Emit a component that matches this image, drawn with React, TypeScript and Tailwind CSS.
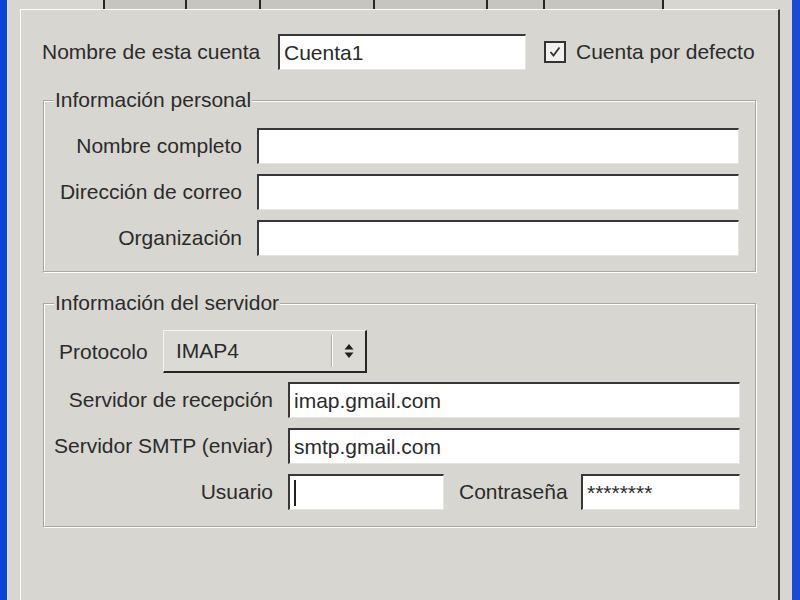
import type { ReactNode } from 'react';

const TABS = [84, 74, 114, 113, 57, 119];

function TextBox({ width, children }: { width: string; children?: ReactNode }) {
  return (
    <div
      className={`${width} h-[36px] bg-white border-t-2 border-l-2 border-b border-r border-t-[#383838] border-l-[#383838] border-b-[#e6e4df] border-r-[#e6e4df] flex items-center pl-[4px] overflow-hidden whitespace-nowrap`}
    >
      {children}
    </div>
  );
}

function Group({ title, children, className }: { title: string; children: ReactNode; className: string }) {
  return (
    <fieldset
      className={`ml-[1px] w-[713px] border border-[#a9a7a1] shadow-[inset_1px_1px_0_#ffffff,1px_1px_0_#ffffff] ${className}`}
    >
      <legend className="ml-[10px] px-[1px] leading-[24px] bg-[#d8d6d1]">{title}</legend>
      {children}
    </fieldset>
  );
}

export default function App() {
  return (
    <div className="w-[800px] h-[600px] overflow-hidden flex bg-[#d8d6d1] font-['Liberation_Sans',Arial,sans-serif] text-[21px] text-[#2b2b2b]">
      <div className="w-[7px] bg-[#0b44dc]" />
      <div className="w-px bg-[#eceae6]" />
      <div className="flex-1 flex flex-col px-[12px]">
        {/* tab strip, only its lower edge is in view */}
        <div className="h-[9px] flex pl-[83px]">
          {TABS.map((w, i) => (
            <div
              key={i}
              style={{ width: w }}
              className={`h-full bg-[#c7c5c0] border-r-2 border-[#262626] ${i === 0 ? 'border-l-2' : ''}`}
            />
          ))}
        </div>

        <div className="flex-1 border-t border-l border-white border-r-2 border-r-[#3a3a3a] pt-[24px] pl-[21px]">
          <div className="flex items-center h-[36px]">
            <span className="w-[222px] whitespace-nowrap">Nombre de esta cuenta</span>
            <div className="ml-[14px]">
              <TextBox width="w-[248px]">Cuenta1</TextBox>
            </div>
            <div className="ml-[18px] w-[22px] h-[22px] border-2 border-[#333333] bg-[#f2f1ee] flex items-center justify-center">
              <svg width="14" height="14" viewBox="0 0 14 14">
                <polyline points="2.5,7 5.5,10.5 11.5,2.5" fill="none" stroke="#333333" strokeWidth="1.8" />
              </svg>
            </div>
            <span className="ml-[10px]">Cuenta por defecto</span>
          </div>

          <Group title="Información personal" className="mt-[18px] pt-[16px] pb-[15px]">
            <div className="flex flex-col gap-[10px]">
              {['Nombre completo', 'Dirección de correo', 'Organización'].map((label) => (
                <div key={label} className="flex items-center h-[36px]">
                  <span className="w-[198px] text-right">{label}</span>
                  <div className="ml-[15px]">
                    <TextBox width="w-[482px]" />
                  </div>
                </div>
              ))}
            </div>
          </Group>

          <Group title="Información del servidor" className="mt-[19px] pt-[15px] pb-[16px]">
            <div className="flex items-center h-[43px] pl-[15px]">
              <span className="w-[91px]">Protocolo</span>
              <div className="ml-[13px] w-[204px] h-[43px] bg-[#dcdad5] border-t border-l border-[#f6f5f2] border-b-2 border-r-2 border-b-[#262626] border-r-[#262626] flex items-center">
                <span className="flex-1 pl-[12px]">IMAP4</span>
                <div className="w-[2px] h-[32px] border-l border-r border-l-[#b4b2ac] border-r-white" />
                <div className="w-[32px] flex items-center justify-center">
                  <svg width="10" height="18" viewBox="0 0 10 18">
                    <polygon points="5,2 9.5,7.5 0.5,7.5" fill="#1f1f1f" />
                    <polygon points="0.5,10.5 9.5,10.5 5,16" fill="#1f1f1f" />
                  </svg>
                </div>
              </div>
            </div>

            <div className="mt-[9px] flex flex-col gap-[10px]">
              <div className="flex items-center h-[36px]">
                <span className="w-[229px] text-right">Servidor de recepción</span>
                <div className="ml-[15px]">
                  <TextBox width="w-[452px]">imap.gmail.com</TextBox>
                </div>
              </div>
              <div className="flex items-center h-[36px]">
                <span className="w-[229px] text-right">Servidor SMTP (enviar)</span>
                <div className="ml-[15px]">
                  <TextBox width="w-[452px]">smtp.gmail.com</TextBox>
                </div>
              </div>
              <div className="flex items-center h-[36px]">
                <span className="w-[229px] text-right">Usuario</span>
                <div className="ml-[15px]">
                  <TextBox width="w-[156px]">
                    <span className="w-[2px] h-[26px] bg-[#1f1f1f]" />
                  </TextBox>
                </div>
                <span className="ml-[15px] w-[108px] whitespace-nowrap">Contraseña</span>
                <div className="ml-[14px]">
                  <TextBox width="w-[159px]">********</TextBox>
                </div>
              </div>
            </div>
          </Group>
        </div>
      </div>
      <div className="w-[8px] bg-[#1a4ad2]" />
    </div>
  );
}
